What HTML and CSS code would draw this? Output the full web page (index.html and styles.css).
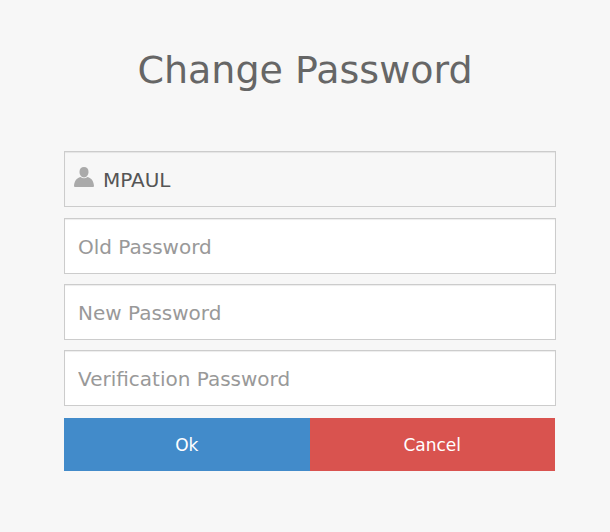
FILE: index.html
```html
<!DOCTYPE html>
<html lang="en">
<head>
<meta charset="utf-8">
<title>Change Password</title>
<link rel="stylesheet" href="styles.css">
</head>
<body>
<main class="page">
  <h1 class="title">Change Password</h1>
  <form class="form">
    <div class="field user">
      <svg class="user-icon" viewBox="0 0 20 20" aria-hidden="true">
        <path d="M10 0C7.200 0 5.500 2 5.500 4.800C5.500 8 7.400 10.500 10 10.500C12.600 10.500 14.500 8 14.500 4.800C14.500 2 12.800 0 10 0Z"/>
        <path d="M6.500 10C2.500 11.200 0.300 14 0 19Q0 20 1 20H19Q20 20 20 19C19.700 14 17.500 11.200 13.500 10C11.500 11.600 8.500 11.600 6.500 10Z"/>
      </svg>
      <input class="user-input" type="text" value="MPAUL" aria-label="User name" readonly>
    </div>
    <input class="field" type="password" placeholder="Old Password" aria-label="Old Password">
    <input class="field" type="password" placeholder="New Password" aria-label="New Password">
    <input class="field" type="password" placeholder="Verification Password" aria-label="Verification Password">
    <div class="actions">
      <button class="button ok" type="submit">Ok</button>
      <button class="button cancel" type="button">Cancel</button>
    </div>
  </form>
</main>
</body>
</html>
```

FILE: styles.css
```css
* {
  box-sizing: border-box;
}

body {
  margin: 0;
  background: #f7f7f7;
  color: #555;
  font-family: Verdana, "DejaVu Sans", sans-serif;
}

.page {
  padding: 46px 0 60px;
}

.title {
  margin: 0 0 57px;
  color: #666;
  font-size: 38px;
  font-weight: 400;
  line-height: 48px;
  text-align: center;
}

.form {
  display: flex;
  flex-direction: column;
  gap: 10px;
  margin: 0 54px 0 64px;
}

.field {
  width: 100%;
  height: 56px;
  padding: 2px 13px 0;
  border: 1px solid #ccc;
  border-radius: 0;
  background: #fff;
  box-shadow: inset 0 1px 1px rgba(0, 0, 0, 0.075);
  color: #555;
  font-family: inherit;
  font-size: 20px;
}

.field::placeholder {
  color: #999;
  opacity: 1;
}

.user {
  display: flex;
  align-items: center;
  gap: 9px;
  margin-bottom: 1px;
  padding: 2px 9px 0;
  background: #f7f7f7;
}

.user-icon {
  width: 20px;
  height: 20px;
  margin-bottom: 6px;
  fill: #aaa;
}

.user-input {
  flex: 1;
  min-width: 0;
  padding: 0;
  border: 0;
  background: transparent;
  color: inherit;
  font: inherit;
}

.actions {
  display: flex;
  padding: 2px 1px 0 0;
}

.button {
  flex: 1;
  height: 53px;
  padding: 0;
  border: 0;
  color: #fff;
  font-family: inherit;
  font-size: 17px;
}

.ok {
  background: #428bca;
}

.cancel {
  background: #d9534f;
}
```
